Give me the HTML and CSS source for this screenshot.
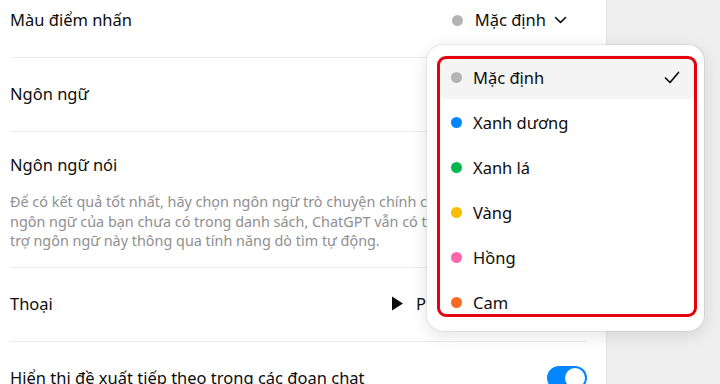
FILE: index.html
```html
<!DOCTYPE html>
<html lang="vi">
<head>
  <meta charset="utf-8">
  <link rel="stylesheet" href="styles.css">
</head>
<body>
  <section class="panel">
    <div class="settings">
      <div class="row">
        <div class="label">Màu điểm nhấn</div>
        <div class="select">
          <span class="dot dot-default"></span>
          <span>Mặc định</span>
          <svg class="chevron" width="13" height="8" viewBox="0 0 13 8" fill="none" stroke="currentColor" stroke-width="1.6" stroke-linecap="round" stroke-linejoin="round">
            <path d="M1.5 1.5l5 5 5-5"/>
          </svg>
        </div>
      </div>

      <div class="row">
        <div class="label">Ngôn ngữ</div>
        <div class="select">
          <span>Tự động</span>
          <svg class="chevron" width="13" height="8" viewBox="0 0 13 8" fill="none" stroke="currentColor" stroke-width="1.6" stroke-linecap="round" stroke-linejoin="round">
            <path d="M1.5 1.5l5 5 5-5"/>
          </svg>
        </div>
      </div>

      <div class="row row-stack">
        <div class="row-head">
          <div class="label">Ngôn ngữ nói</div>
          <div class="select">
            <span>Tự động</span>
            <svg class="chevron" width="13" height="8" viewBox="0 0 13 8" fill="none" stroke="currentColor" stroke-width="1.6" stroke-linecap="round" stroke-linejoin="round">
              <path d="M1.5 1.5l5 5 5-5"/>
            </svg>
          </div>
        </div>
        <p class="hint">Để có kết quả tốt nhất, hãy chọn ngôn ngữ trò chuyện chính của bạn. Nếu<br>ngôn ngữ của bạn chưa có trong danh sách, ChatGPT vẫn có thể hỗ<br>trợ ngôn ngữ này thông qua tính năng dò tìm tự động.</p>
      </div>

      <div class="row">
        <div class="label">Thoại</div>
        <div class="voice">
          <svg class="play" width="11" height="15" viewBox="0 0 11 15">
            <path d="M0 0.5L11 7.5L0 14.5Z" fill="currentColor"/>
          </svg>
          <span>Phát</span>
          <span class="voice-sep"></span>
          <span>Breeze</span>
          <svg class="chevron" width="13" height="8" viewBox="0 0 13 8" fill="none" stroke="currentColor" stroke-width="1.6" stroke-linecap="round" stroke-linejoin="round">
            <path d="M1.5 1.5l5 5 5-5"/>
          </svg>
        </div>
      </div>

      <div class="row">
        <div class="label">Hiển thị đề xuất tiếp theo trong các đoạn chat</div>
        <div class="toggle"><span class="knob"></span></div>
      </div>
    </div>
  </section>

  <div class="menu">
    <div class="item active">
      <span class="dot dot-default"></span>
      <span>Mặc định</span>
      <svg class="check" width="16" height="13" viewBox="0 0 16 13" fill="none" stroke="currentColor" stroke-width="1.7" stroke-linecap="round" stroke-linejoin="round">
        <path d="M1.5 7l4.5 4.5L14.5 1.5"/>
      </svg>
    </div>
    <div class="item"><span class="dot dot-blue"></span><span>Xanh dương</span></div>
    <div class="item"><span class="dot dot-green"></span><span>Xanh lá</span></div>
    <div class="item"><span class="dot dot-yellow"></span><span>Vàng</span></div>
    <div class="item"><span class="dot dot-pink"></span><span>Hồng</span></div>
    <div class="item"><span class="dot dot-orange"></span><span>Cam</span></div>
    <div class="item"><span class="dot dot-purple"></span><span>Tím</span></div>
    <div class="annotation"></div>
  </div>
</body>
</html>
```

FILE: styles.css
```css
:root {
  --text: #0d0d0d;
  --muted: #8f8f8f;
  --line: #ececec;
  --side: #efefef;
  --accent: #0285ff;
}

* {
  margin: 0;
  padding: 0;
  box-sizing: border-box;
}

body {
  font-family: "Noto Sans", sans-serif;
  color: var(--text);
  background: var(--side);
  height: 100vh;
  overflow: hidden;
  display: flex;
}

.panel {
  width: 607px;
  height: 100vh;
  background: #fff;
  border-right: 1px solid #e3e3e3;
  padding: 0 19px 0 10px;
  overflow: hidden;
}

/* list is scrolled a little, first row is cut at the top */
.settings {
  margin-top: -16px;
}

.row {
  display: flex;
  align-items: center;
  justify-content: space-between;
  padding: 24px 0 25px;
  border-bottom: 1px solid var(--line);
  font-size: 16.5px;
  line-height: 24px;
}

.row-stack {
  display: block;
  padding: 21px 0 16px;
}

.row-head {
  display: flex;
  align-items: center;
  justify-content: space-between;
}

.hint {
  margin-top: 15px;
  font-size: 14.4px;
  line-height: 19.5px;
  color: var(--muted);
  white-space: nowrap;
}

.select {
  display: flex;
  align-items: center;
  gap: 12px;
  padding-right: 20px;
}

.select .chevron {
  margin-left: -4px;
}

.voice {
  width: 195px;
  display: flex;
  align-items: center;
  gap: 13px;
}

.voice-sep {
  width: 1px;
  height: 18px;
  background: #ddd;
}

.dot {
  width: 11px;
  height: 11px;
  border-radius: 50%;
  flex-shrink: 0;
}

.dot-default { background: #b4b4b4; }
.dot-blue { background: #0285ff; }
.dot-green { background: #04b84c; }
.dot-yellow { background: #f6c000; }
.dot-pink { background: #ff66ad; }
.dot-orange { background: #fb6a22; }
.dot-purple { background: #924ff7; }

.toggle {
  width: 40px;
  height: 24px;
  border-radius: 12px;
  background: var(--accent);
  display: flex;
  align-items: center;
  justify-content: flex-end;
  padding: 2px;
}

.knob {
  width: 20px;
  height: 20px;
  border-radius: 50%;
  background: #fff;
}

.menu {
  position: absolute;
  left: 427px;
  top: 45px;
  width: 277px;
  height: 286px;
  background: #fff;
  border-radius: 16px;
  box-shadow: 0 4px 18px rgba(0, 0, 0, 0.12), 0 0 0 1px rgba(0, 0, 0, 0.06);
  padding: 10px 7px 0 10px;
  overflow: hidden;
}

.item {
  height: 44px;
  display: flex;
  align-items: center;
  gap: 11px;
  padding: 0 17px 0 14px;
  border-radius: 10px;
  font-size: 16.5px;
}

.item + .item {
  margin-top: 1px;
}

.item.active {
  background: #f4f4f4;
}

.check {
  margin-left: auto;
}

/* red highlight drawn over the menu */
.annotation {
  position: absolute;
  left: 10px;
  top: 11px;
  width: 260px;
  height: 261px;
  border: 3px solid #e5000b;
  border-radius: 9px;
  pointer-events: none;
}
```
